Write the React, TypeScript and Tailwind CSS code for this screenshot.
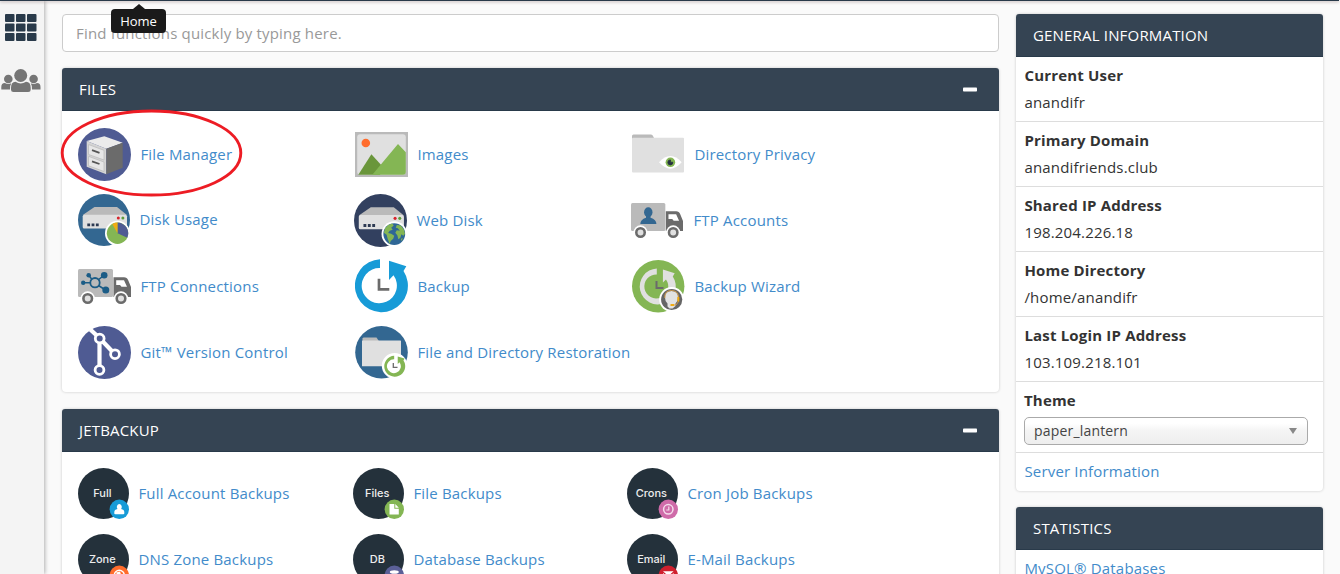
import React from "react";

const SANS = "font-['Open_Sans','Noto_Sans',sans-serif]";

function FileManagerIcon() {
  return (
    <svg width="53" height="53" viewBox="0 0 53 53">
      <circle cx="26.5" cy="26.5" r="26.5" fill="#4f5b93" />
      <path d="M8.7 13 26.3 8.3 44.7 14.7 28.3 20.7Z" fill="#ebebeb" />
      <path d="M8.7 13 28.3 20.7V46.3L8.7 38.7Z" fill="#d4d4d4" />
      <path d="M28.3 20.7 44.7 14.7V39.7L28.3 46.3Z" fill="#6b6b6b" />
      <path d="M10.5 16.5 26 22.3V32L10.5 26.5ZM10.5 28.3 26 34V43.5L10.5 37.8Z" fill="#e6e6e6" stroke="#bdbdbd" strokeWidth=".8" />
      <path d="M14 22.2 21.5 24.8M14 33.4 21.5 36" fill="none" stroke="#555" strokeWidth="1.8" />
    </svg>
  );
}

function DiskBase({ color }: { color: string }) {
  return (
    <>
      <circle cx="26" cy="26" r="26" fill={color} />
      <path d="M16.5 13H39L49 21H4.7Z" fill="#bababa" />
      <rect x="4.7" y="20.7" width="44.3" height="13.8" rx="1.5" fill="#e0e0e0" />
      <path d="M9.3 29.5h2.8v2.8h-2.8zM13.6 29.5h2.8v2.8h-2.8zM17.9 29.5h2.8v2.8h-2.8z" fill="#2d3a52" />
      <circle cx="40.3" cy="23.9" r="1.5" fill="#d8232a" />
      <circle cx="44.9" cy="23.9" r="1.5" fill="#5f9a3c" />
      <circle cx="39.5" cy="39.3" r="12.5" fill="#fff" />
    </>
  );
}

function DiskUsageIcon() {
  return (
    <svg width="52" height="52" viewBox="0 0 52 52">
      <DiskBase color="#336791" />
      <circle cx="39.5" cy="39.3" r="10.7" fill="#84b654" />
      <path d="M39.5 39.3V28.6A10.7 10.7 0 0 1 49.3 43.7Z" fill="#4f5b93" />
      <path d="M39.5 39.3V28.6A10.7 10.7 0 0 0 34.3 30Z" fill="#f0ab13" />
    </svg>
  );
}

function WebDiskIcon() {
  return (
    <svg width="53" height="53" viewBox="0 0 52 52">
      <DiskBase color="#32405f" />
      <circle cx="39.5" cy="39.3" r="10.7" fill="#2f6796" />
      <path d="M30.5 33.5 33.5 30.5 37.5 29 39 31 36.5 33 38 35 35 36 33.5 38.2 36.5 39 39.5 41 38.5 44 36 46 35 49 33 44 32 40 29.3 38ZM42 30.5 46 31 49 35 50 39 48.5 41 46.5 39.5 45.5 43 43.5 44.5 42.5 40.5 40.5 38 42 35.5 45 36 43 33.5 41 33ZM46 44 48 43.5 46.5 46Z" fill="#84b654" />
    </svg>
  );
}

function ImagesIcon() {
  return (
    <svg width="53" height="45" viewBox="0 0 53 45">
      <rect width="53" height="45" fill="#bababa" />
      <rect x="2.2" y="2.2" width="48.6" height="40.6" rx="3" fill="#e0e0e0" />
      <circle cx="10.8" cy="11" r="4.3" fill="#ff6c2c" />
      <path d="M3.3 42.8 16.4 22.3 28 35 25 42.8Z" fill="#6a963b" />
      <path d="M17.3 42.8 43 12 50.8 20.3V40a2.8 2.8 0 0 1-2.8 2.8Z" fill="#84b654" />
    </svg>
  );
}

function DirectoryPrivacyIcon() {
  return (
    <svg className="mb-px" width="53" height="39" viewBox="0 0 53 39">
      <path d="M0 5V2Q0 .5 1.5 .5H19Q20.5 .5 21 2L22.5 5Z" fill="#bababa" />
      <rect x="0" y="3.7" width="52" height="34.8" rx="1" fill="#e0e0e0" />
      <path d="M27 28.3Q38.5 15.5 49.7 28.3 38.5 41 27 28.3Z" fill="#fff" />
      <circle cx="38.4" cy="28.3" r="4.8" fill="#84b654" />
      <path d="M38.4 25.9V28.2H40.8a2.5 2.5 0 1 1-2.4-2.3Z" fill="#243040" stroke="#243040" strokeWidth=".8" />
    </svg>
  );
}

function Truck({ width, children }: { width: number; children: React.ReactNode }) {
  return (
    <svg className="mt-0.5" width={width} height="36" viewBox="0 0 53 36" preserveAspectRatio="none">
      <rect width="35" height="28" rx="1.5" fill="#bababa" />
      <path d="M35.5 8.2H46Q49 8.2 50.3 11.5L53 18V28H35.5Z" fill="#6b6b6b" />
      <path d="M38.2 11.2H46L49 17.7H43.5L42 16H38.2Z" fill="#fff" />
      {children}
      <circle cx="9.7" cy="29.5" r="7.2" fill="#fff" />
      <circle cx="43" cy="29.5" r="7.2" fill="#fff" />
      <circle cx="9.7" cy="29.5" r="4.3" fill="#e0e0e0" stroke="#6b6b6b" strokeWidth="2.6" />
      <circle cx="43" cy="29.5" r="4.3" fill="#e0e0e0" stroke="#6b6b6b" strokeWidth="2.6" />
    </svg>
  );
}

function FtpAccountsIcon() {
  return (
    <Truck width={52}>
      <ellipse cx="17.6" cy="9.3" rx="4.3" ry="5" fill="#336791" />
      <path d="M15.3 12H19.9V14.7Q25.900 16.500 25.900 21H9.500Q9.500 16.500 15.300 14.700Z" fill="#336791" />
    </Truck>
  );
}

function FtpConnectionsIcon() {
  return (
    <Truck width={53}>
      <g stroke="#1b5c86" strokeWidth="1.5" fill="none">
        <path d="M5 13.7h8M10.700 6.300 14 10.500M26 6.300 20 11M27.500 21 20.500 16.500" />
        <circle cx="17" cy="13.7" r="4.7" strokeWidth="1.8" />
      </g>
      <g fill="#1b5c86">
        <circle cx="5.2" cy="13.7" r="2.2" />
        <circle cx="10.7" cy="6.3" r="2.3" />
        <circle cx="26.2" cy="6.3" r="3.3" />
        <circle cx="27.8" cy="21" r="3.5" />
      </g>
    </Truck>
  );
}

const RING =
  "M25 .2A26.5 26.5 0 1 0 48.5 12L51.3 7.3 34 1.8V21L38.5 16.3A17.6 17.6 0 1 1 25 9.1Z";

function BackupIcon() {
  return (
    <svg width="53" height="54" viewBox="0 0 53 54">
      <path d={RING} fill="#179bd7" />
      <path d="M24 19.7V30.3H34.3" fill="none" stroke="#6b6b6b" strokeWidth="2.7" />
    </svg>
  );
}

function BackupWizardIcon() {
  return (
    <svg width="53" height="53" viewBox="0 0 53 53">
      <circle cx="26.2" cy="26.3" r="26.2" fill="#84b654" />
      <path d={RING} fill="#e0e0e0" transform="translate(7.800 8.300) scale(.68)" />
      <path d="M24.5 21V28H31.500" fill="none" stroke="#6b6b6b" strokeWidth="2" />
      <circle cx="39.7" cy="39.5" r="12.5" fill="#fff" />
      <circle cx="39.7" cy="39.5" r="10.6" fill="#666" />
      <path d="M33 37.500Q33 31 39.500 31T46 37.500Q46 41.500 43.500 43.500V46L40.500 48.500H37.500L35.500 46.500V43.500Q33 41.500 33 37.500Z" fill="#e2e2e2" />
      <path d="M32.800 38Q32.300 30.500 39.500 30.500T46.500 38V41.500L44 45H40" fill="none" stroke="#d09a4a" strokeWidth="1" />
      <path d="M45.300 37h2v4.500h-2zM38.500 44h3.500v2h-3.500z" fill="#f0ab13" />
    </svg>
  );
}

function GitIcon() {
  return (
    <svg width="53" height="53" viewBox="0 0 53 53">
      <circle cx="26.5" cy="26.5" r="26.5" fill="#4f5b93" />
      <path d="M12.3 3.5 21.7 12.3 37 28.2M21.5 12.3V43.7" stroke="#fff" strokeWidth="4.2" fill="none" />
      <g fill="#4f5b93" stroke="#fff" strokeWidth="2.8">
        <circle cx="21.7" cy="12.5" r="4.4" />
        <circle cx="37" cy="28.2" r="4.4" />
        <circle cx="21.5" cy="44" r="4.4" />
      </g>
    </svg>
  );
}

function RestorationIcon() {
  return (
    <svg width="53" height="53" viewBox="0 0 53 53">
      <circle cx="26.5" cy="26.3" r="26.3" fill="#336791" />
      <path d="M7.5 14V12.5L8.5 11.5H21.5L23.5 14.5V17H7.5Z" fill="#bababa" />
      <rect x="7" y="14.5" width="39" height="25.8" rx=".6" fill="#e0e0e0" />
      <circle cx="39.6" cy="39.8" r="12.8" fill="#fff" />
      <path d={RING} fill="#84b654" transform="translate(29.300 29.700) scale(.395)" />
      <path d="M38.3 37V41.300H42.500" fill="none" stroke="#6b6b6b" strokeWidth="1.3" />
    </svg>
  );
}

function JetIcon({ label, color, children }: { label: string; color: string; children: React.ReactNode }) {
  return (
    <svg width="51" height="51" viewBox="0 0 51 51">
      <circle cx="25.5" cy="25.5" r="25.5" fill="#24313b" />
      <text x="24.3" y="29" textAnchor="middle" fill="#ededed" fontSize="11" fontWeight="500" letterSpacing="0" fontFamily="Inter, sans-serif">
        {label}
      </text>
      <circle cx="41.3" cy="41.3" r="9.7" fill={color} />
      {children}
    </svg>
  );
}

type Item = { label: string; icon: React.ReactNode; rowClass?: string; iconClass?: string; textClass?: string };

const fileItems: Item[] = [
  { label: "File Manager", icon: <FileManagerIcon /> },
  { label: "Images", icon: <ImagesIcon /> },
  { label: "Directory Privacy", icon: <DirectoryPrivacyIcon /> },
  { label: "Disk Usage", icon: <DiskUsageIcon />, iconClass: "w-[52px]", textClass: "pb-0.5" },
  { label: "Web Disk", icon: <WebDiskIcon />, rowClass: "-ml-px" },
  { label: "FTP Accounts", icon: <FtpAccountsIcon />, rowClass: "-ml-px" },
  { label: "FTP Connections", icon: <FtpConnectionsIcon /> },
  { label: "Backup", icon: <BackupIcon /> },
  { label: "Backup Wizard", icon: <BackupWizardIcon /> },
  { label: "Git™ Version Control", icon: <GitIcon /> },
  { label: "File and Directory Restoration", icon: <RestorationIcon /> },
];

const jetItems: Item[] = [
  {
    label: "Full Account Backups",
    icon: (
      <JetIcon label="Full" color="#179bd7">
        <path d="M41.3 36a2.5 3 0 0 1 1.8 5q3.2 .6 3.2 3v1.5q0 .8-1 .8h-8q-1 0-1-.8V44q0-2.4 3.2-3a2.5 3 0 0 1 1.8-5Z" fill="#fff" />
      </JetIcon>
    ),
  },
  {
    label: "File Backups",
    icon: (
      <JetIcon label="Files" color="#84b654">
        <path d="M36.5 36h4.8v4.8h4.5v5.7h-9.3ZM42.3 36 45.8 39.7h-3.5Z" fill="#fff" />
      </JetIcon>
    ),
  },
  {
    label: "Cron Job Backups",
    icon: (
      <JetIcon label="Crons" color="#cf6ba9">
        <circle cx="41.3" cy="41.3" r="4.7" fill="none" stroke="#f5dcec" strokeWidth="1.5" />
        <path d="M41.8 38.5v3.5h-2.5" fill="none" stroke="#f5dcec" strokeWidth="1.2" />
      </JetIcon>
    ),
  },
  {
    label: "DNS Zone Backups",
    icon: (
      <JetIcon label="Zone" color="#ff6c2c">
        <circle cx="41.3" cy="41.3" r="5" fill="none" stroke="#fff" strokeWidth="1.4" />
        <path d="M38 38.5l4-1 1 3-3 2Z" fill="#fff" />
      </JetIcon>
    ),
  },
  {
    label: "Database Backups",
    icon: (
      <JetIcon label="DB" color="#5b6098">
        <ellipse cx="41.3" cy="38" rx="4.5" ry="1.8" fill="#fff" />
        <path d="M36.8 40q4.5 2 9 0v5q-4.5 3-9 0Z" fill="#fff" />
      </JetIcon>
    ),
  },
  {
    label: "E-Mail Backups",
    icon: (
      <JetIcon label="Email" color="#d0202e">
        <path d="M36 37.3h10.6L41.3 42ZM36 39v6.5h10.6V39L41.3 43.5Z" fill="#fff" />
      </JetIcon>
    ),
  },
];

const info = [
  ["Current User", "anandifr"],
  ["Primary Domain", "anandifriends.club"],
  ["Shared IP Address", "198.204.226.18"],
  ["Home Directory", "/home/anandifr"],
  ["Last Login IP Address", "103.109.218.101"],
];

function PanelHeader({ title, collapsible }: { title: string; collapsible?: boolean }) {
  return (
    <header className="flex h-[43px] items-center justify-between rounded-t-[3px] border-b border-[#293a4a] bg-[#354453] pr-[22px] pl-[17px] text-white">
      <h2 className="text-[15px] leading-5">{title}</h2>
      {collapsible && (
        <svg width="14" height="5" viewBox="0 0 14 5" fill="#fff"><rect y=".4" width="14" height="4.2" rx=".8" /></svg>
      )}
    </header>
  );
}

function ItemLink({ item, iconClass }: { item: Item; iconClass: string }) {
  return (
    <a className={`flex items-center text-[#428bca] ${item.rowClass ?? ""}`}>
      <span className={`mr-[9.4px] shrink-0 ${item.iconClass ?? iconClass}`}>{item.icon}</span>
      <span className={`whitespace-nowrap ${item.textClass ?? ""}`}>{item.label}</span>
    </a>
  );
}

export default function App() {
  return (
    <div className={`${SANS} relative flex h-[574px] w-[1340px] flex-col overflow-hidden bg-[#fafafa] text-[15px] tracking-[0.18px] text-[#333]`}>
      <div className="z-10 h-px w-[1339px] shrink-0 bg-[#293a4a] shadow-[0_1px_3px_rgba(60,20,20,0.45)]" />
      <div className="flex min-h-0 flex-1">
        <nav className="mr-px flex w-11 shrink-0 flex-col bg-[#f4f4f4] pt-[13px] shadow-[1px_0_4px_rgba(0,0,0,0.3)]">
          <svg className="ml-[5px]" width="32" height="27" viewBox="0 0 32 27" fill="#293a4a">
            {[0, 11, 22].map((x) =>
              [0, 9.5, 19].map((y) => <rect key={`${x}-${y}`} x={x} y={y} width="9.5" height="8" rx="1" />)
            )}
          </svg>
          <svg className="mt-7 ml-px" width="40" height="24" viewBox="0 0 40 24" fill="#757575">
            <circle cx="7.3" cy="10" r="4.3" />
            <circle cx="32.6" cy="10" r="4.3" />
            <path d="M.3 20.5V18q0-4 3.500-4 3.500 2 6.500.3Q9 16 9 20.500ZM39.500 20.500V18q0-4-3.500-4-3.500 2-6.300.3Q31 16 31 20.500Z" />
            <circle cx="19.7" cy="6.5" r="6.5" />
            <path d="M14.5 12.8q5.200 3.200 10.500 0 4.700 0 4.700 6v2q0 2.200-2.500 2.200H12.500Q10 23 10 20.800v-2q0-6 4.500-6Z" />
          </svg>
        </nav>

        <main className="ml-[17px] flex w-[937px] shrink-0 flex-col pt-[13px]">
          <input
            className="h-[38px] w-full shrink-0 rounded border border-[#ccc] bg-white px-[13px] text-[15px] tracking-[0.18px] placeholder:text-[#999]"
            placeholder="Find functions quickly by typing here."
          />
          <section className="mt-4 h-[324px] shrink-0 rounded bg-white shadow-[0_0_3px_rgba(0,0,0,0.2)]">
            <PanelHeader title="FILES" collapsible />
            <div className="grid auto-rows-[66px] grid-cols-[277px_277px_1fr] pt-2.5 pl-4">
              {fileItems.map((item) => (
                <ItemLink key={item.label} item={item} iconClass="w-[53px]" />
              ))}
            </div>
          </section>
          <section className="mt-[17px] h-[324px] shrink-0 rounded bg-white shadow-[0_0_3px_rgba(0,0,0,0.2)]">
            <PanelHeader title="JETBACKUP" collapsible />
            <div className="grid auto-rows-[66px] grid-cols-[275px_274px_1fr] pt-2 pl-4">
              {jetItems.map((item) => (
                <ItemLink key={item.label} item={item} iconClass="w-[51px]" />
              ))}
            </div>
          </section>
        </main>

        <aside className="ml-[17px] w-[307px] shrink-0 pt-[13px]">
          <section className="rounded bg-white shadow-[0_0_3px_rgba(0,0,0,0.2)]">
            <PanelHeader title="GENERAL INFORMATION" />
            {info.map(([name, value]) => (
              <div key={name} className="flex h-[65px] flex-col border-b border-[#ddd] pt-[5px] pl-[8.4px] leading-[27px]">
                <strong className="font-bold">{name}</strong>
                <span>{value}</span>
              </div>
            ))}
            <div className="h-[71px] border-b border-[#ddd] pt-[5px] pl-2">
              <strong className="block leading-[27px] font-bold">Theme</strong>
              <div className="mt-[3px] flex h-7 w-[284px] items-center justify-between rounded-[5px] border border-[#aaa] bg-linear-to-b from-white from-20% via-[#f4f4f4] via-50% to-[#eee] pr-2.5 pl-[9px] text-sm text-[#444]">
                <span>paper_lantern</span>
                <svg className="mb-px" width="8" height="6" viewBox="0 0 8 6" fill="#888"><path d="M0 0h8L4 6Z" /></svg>
              </div>
            </div>
            <a className="block h-[38px] pl-[8.4px] leading-9 text-[#428bca]">Server Information</a>
          </section>
          <section className="mt-4 rounded bg-white shadow-[0_0_3px_rgba(0,0,0,0.2)]">
            <PanelHeader title="STATISTICS" />
            <a className="block h-[38px] pl-[8.4px] leading-9 text-[#428bca]">MySQL® Databases</a>
          </section>
        </aside>
      </div>

      <div className="absolute top-1 left-[111px] z-20 flex w-[55px] flex-col items-center">
        <svg width="12" height="5" viewBox="0 0 12 5" fill="#1a1a1a"><path d="M6 0 12 5H0Z" /></svg>
        <div className="flex h-6 w-full items-center justify-center rounded bg-[#1a1a1a] pt-0.5 text-[13px] font-medium tracking-normal text-white">Home</div>
      </div>
      <svg className="absolute top-[108px] left-[60px] z-20" width="184" height="90" viewBox="0 0 184 90" fill="none">
        <ellipse cx="91.5" cy="45" rx="89.3" ry="42" stroke="#ed1c24" strokeWidth="2.9" />
      </svg>
    </div>
  );
}
